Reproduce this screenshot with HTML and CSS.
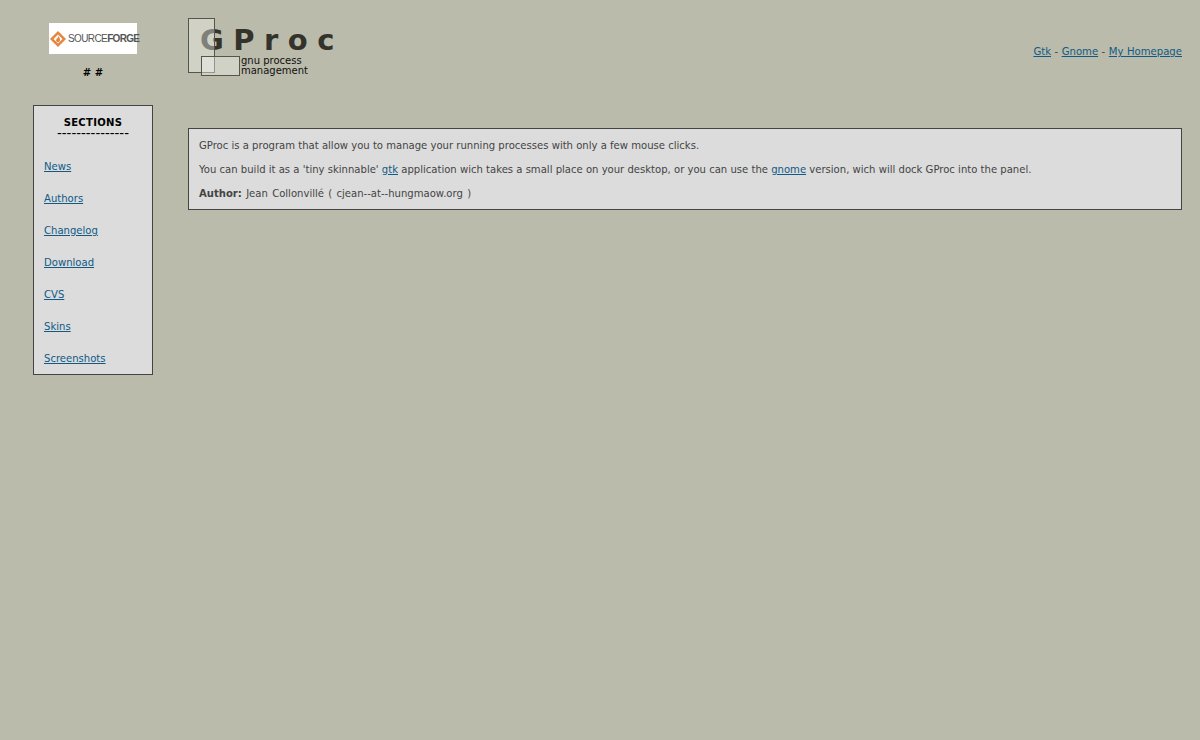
FILE: index.html
```html
<!DOCTYPE html>
<html>

<head>
    <title>GProc - gnu process management</title>
    <link rel="stylesheet" href="styles.css">
</head>

<body>
    <div id="left">
        <div class="sf-logo">
            <svg width="16" height="16" viewBox="1 1 16 16">
                <path d="M9 1 L17 9 L9 17 L1 9 Z M9 4.5 L4.5 9 L9 13.5 L13.5 9 Z" fill="#e8843c" fill-rule="evenodd"/>
                <path d="M9.5 5.5 C10 8 11.5 8.5 11 10.5 C10.6 12 9 12.6 8 12 C6.6 11 7 9.2 8 8.4 C8.8 7.8 9.6 7 9.5 5.5 Z" fill="#e8843c"/>
            </svg>
            <span class="sf-source">SOURCE</span><span class="sf-forge">FORGE</span>
        </div>
        <div class="hashes"># #</div>
        <div id="menu">
            <div class="menu-title">SECTIONS</div>
            <div class="menu-rule">---------------</div>
            <ul>
                <li><a href="#">News</a></li>
                <li><a href="#">Authors</a></li>
                <li><a href="#">Changelog</a></li>
                <li><a href="#">Download</a></li>
                <li><a href="#">CVS</a></li>
                <li><a href="#">Skins</a></li>
                <li><a href="#">Screenshots</a></li>
            </ul>
        </div>
    </div>
    <div id="main">
        <div id="header">
            <div class="logo">
                <div class="logo-name">GProc</div>
                <div class="logo-square tall"></div>
                <div class="logo-square wide"></div>
                <div class="logo-sub">gnu process<br>management</div>
            </div>
            <div class="top-links"><a href="#">Gtk</a> - <a href="#">Gnome</a> - <a href="#">My Homepage</a></div>
        </div>
        <div class="box">
            <p>GProc is a program that allow you to manage your running processes with only a few mouse clicks.</p>
            <p>You can build it as a 'tiny skinnable' <a href="#">gtk</a> application wich takes a small place on your desktop, or you can use the <a href="#">gnome</a> version, wich will dock GProc into the panel.</p>
            <p class="author"><b>Author:</b> Jean Collonvillé ( cjean--at--hungmaow.org )</p>
        </div>
    </div>
</body>
</html>
```

FILE: styles.css
```css
html {
    height: 100%;
    background-color: #babbaa;
}

body {
    margin: 0;
    min-height: 740px;
    box-sizing: border-box;
    padding: 0 18px 0 33px;
    display: flex;
    gap: 35px;
    font-family: "DejaVu Sans", Verdana, sans-serif;
    font-size: 10.07px;
    color: #444;
    background-color: #babbaa;
}

a {
    color: #0f5a86;
}

#left {
    width: 120px;
    flex: none;
    padding-top: 23px;
}

.sf-logo {
    width: 88px;
    height: 31px;
    margin: 0 auto;
    background-color: #fff;
    display: flex;
    align-items: center;
    font-family: "Liberation Sans", Arial, sans-serif;
    font-size: 10px;
    color: #555;
    white-space: nowrap;
}

.sf-logo svg {
    margin: 0 2px 0 1px;
    flex: none;
}

.sf-source {
    letter-spacing: -0.6px;
}

.sf-forge {
    font-weight: bold;
    letter-spacing: -0.7px;
}

.hashes {
    margin-top: 13px;
    height: 15px;
    line-height: 12px;
    text-align: center;
    font-weight: bold;
    color: #000;
}

#menu {
    margin-top: 23px;
    height: 270px;
    box-sizing: border-box;
    padding: 10px;
    border: 1px solid #444;
    background-color: #dcdcdc;
}

.menu-title {
    text-align: center;
    font-weight: bold;
    letter-spacing: 0.3px;
    color: #000;
    line-height: 13px;
}

.menu-rule {
    text-align: center;
    color: #000;
    font-size: 13.3px;
    line-height: 10px;
    white-space: nowrap;
}

#menu ul {
    margin: 21px 0 0;
    padding: 0;
    list-style: none;
    display: flex;
    flex-direction: column;
    gap: 19px;
}

#menu li {
    line-height: 13px;
}

#main {
    flex: 1;
}

#header {
    height: 128px;
    display: flex;
    justify-content: space-between;
}

.logo {
    position: relative;
    width: 160px;
    height: 76px;
}

.logo-square {
    position: absolute;
    box-sizing: border-box;
    border: 1px solid #55554a;
    background-color: rgba(245, 245, 240, 0.4);
}

.logo-square.tall {
    left: 0;
    top: 18px;
    width: 27px;
    height: 55px;
}

.logo-square.wide {
    left: 13px;
    top: 56px;
    width: 39px;
    height: 20px;
}

.logo-name {
    position: absolute;
    left: 12px;
    top: 25px;
    font-size: 29px;
    line-height: 30px;
    font-weight: bold;
    letter-spacing: 9.5px;
    color: #33332c;
}

.logo-sub {
    position: absolute;
    left: 53px;
    top: 56px;
    font-size: 10px;
    line-height: 10px;
    color: #111;
}

.top-links {
    margin-top: 45px;
    line-height: 13px;
    font-size: 10.1px;
    word-spacing: 0.3px;
}

.box {
    height: 82px;
    box-sizing: border-box;
    padding: 10px;
    border: 1px solid #444;
    background-color: #dcdcdc;
}

.box p {
    margin: 0 0 11px;
    line-height: 13px;
}

.box .author {
    word-spacing: 1.1px;
}
```
